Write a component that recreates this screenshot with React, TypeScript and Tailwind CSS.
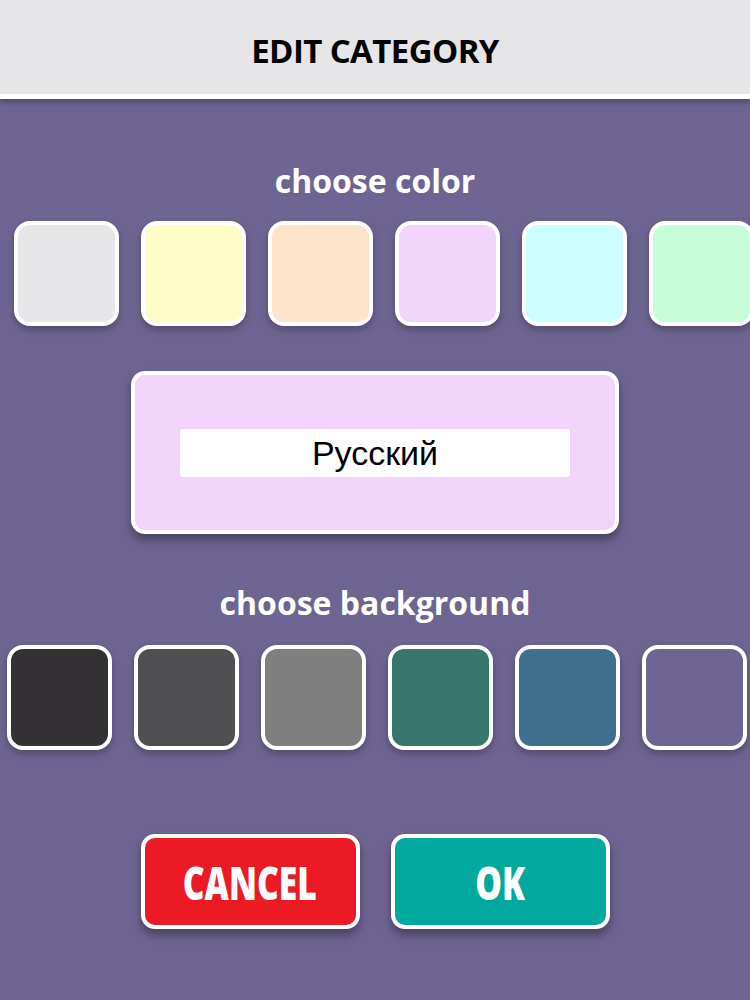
import React from "react";

const colors = ["#e6e5e8", "#fefdc8", "#fee3cb", "#f2d3f9", "#ccfdff", "#c6fdd8"];
const bgs = ["#333133", "#4f4e50", "#7f7f7f", "#38756d", "#3e6f8c", "#6e6491"];

export default function App() {
  return (
    <div className="w-[750px] h-[1000px] bg-[#6e6491] overflow-hidden flex flex-col" style={{ fontFamily: '"Open Sans", sans-serif' }}>
      <div className="h-[99px] pt-[6px] bg-[#e6e5e8] border-b-[5px] border-white flex items-center justify-center shadow-[0_3px_6px_rgba(0,0,0,0.3)] relative z-10">
        <h1 className="text-[33px] font-bold text-black tracking-[-0.6px] leading-none">EDIT CATEGORY</h1>
      </div>

      <div className="mt-[64px] text-center text-white font-bold text-[32px] leading-[36px]">choose color</div>

      <div className="mt-[22px] flex gap-[22px] pl-[14px]">
        {colors.map((c) => (
          <div
            key={c}
            className="w-[105px] h-[105px] shrink-0 rounded-[16px] border-[4px] border-white shadow-[0_4px_7px_rgba(0,0,0,0.25)]"
            style={{ backgroundColor: c }}
          />
        ))}
      </div>

      <div className="mt-[45px] self-center w-[488px] h-[163px] rounded-[14px] border-[4px] border-white bg-[#f2d3f9] shadow-[0_6px_10px_rgba(0,0,0,0.35)] flex items-center justify-center">
        <div className="w-[390px] h-[48px] bg-white rounded-[3px] flex items-center justify-center">
          <span className="text-[34px] leading-none text-black" style={{ fontFamily: '"Liberation Sans", Arial, sans-serif' }}>Русский</span>
        </div>
      </div>

      <div className="mt-[51px] text-center text-white font-bold text-[32px] leading-[36px]">choose background</div>

      <div className="mt-[24px] flex gap-[22px] pl-[7px]">
        {bgs.map((c) => (
          <div
            key={c}
            className="w-[105px] h-[105px] shrink-0 rounded-[16px] border-[4px] border-white shadow-[0_4px_7px_rgba(0,0,0,0.25)]"
            style={{ backgroundColor: c }}
          />
        ))}
      </div>

      <div className="mt-[84px] flex justify-center gap-[31px]">
        <button className="w-[219px] h-[95px] rounded-[14px] border-[4px] border-white bg-[#ec1a25] shadow-[0_6px_10px_rgba(0,0,0,0.35)] flex items-center justify-center">
          <span className="text-white font-extrabold text-[46px] leading-none scale-x-[0.73] inline-block">CANCEL</span>
        </button>
        <button className="w-[219px] h-[95px] rounded-[14px] border-[4px] border-white bg-[#00a89d] shadow-[0_6px_10px_rgba(0,0,0,0.35)] flex items-center justify-center">
          <span className="text-white font-extrabold text-[46px] leading-none scale-x-[0.73] inline-block">OK</span>
        </button>
      </div>
    </div>
  );
}
